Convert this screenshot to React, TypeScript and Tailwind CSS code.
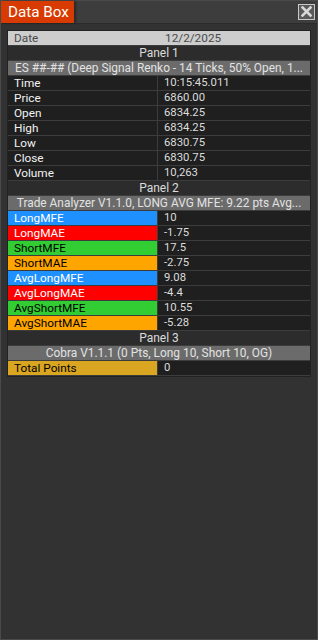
import React from "react";

type Row = { label: string; value: string; bg?: string; fg?: string };

const panel1: Row[] = [
  { label: "Time", value: "10:15:45.011" },
  { label: "Price", value: "6860.00" },
  { label: "Open", value: "6834.25" },
  { label: "High", value: "6834.25" },
  { label: "Low", value: "6830.75" },
  { label: "Close", value: "6830.75" },
  { label: "Volume", value: "10,263" },
];

const panel2: Row[] = [
  { label: "LongMFE", value: "10", bg: "bg-[#1e90ff]", fg: "text-white" },
  { label: "LongMAE", value: "-1.75", bg: "bg-[#ff0000]", fg: "text-white" },
  { label: "ShortMFE", value: "17.5", bg: "bg-[#32cd32]", fg: "text-black" },
  { label: "ShortMAE", value: "-2.75", bg: "bg-[#ffa500]", fg: "text-black" },
  { label: "AvgLongMFE", value: "9.08", bg: "bg-[#1e90ff]", fg: "text-white" },
  { label: "AvgLongMAE", value: "-4.4", bg: "bg-[#ff0000]", fg: "text-white" },
  { label: "AvgShortMFE", value: "10.55", bg: "bg-[#32cd32]", fg: "text-black" },
  { label: "AvgShortMAE", value: "-5.28", bg: "bg-[#ffa500]", fg: "text-black" },
];

const panel3: Row[] = [
  { label: "Total Points", value: "0", bg: "bg-[#daa520]", fg: "text-black" },
];

function DataRow({ r }: { r: Row }) {
  return (
    <div className="flex h-[15px] border-b border-[#3c3c3c] bg-[#1f1f1f] text-[11.8px]">
      <div
        className={`w-[150px] shrink-0 pl-[6px] border-r border-[#3c3c3c] leading-[14px] ${
          r.bg ?? ""
        } ${r.fg ?? "text-[#f2f2f2]"}`}
      >
        {r.label}
      </div>
      <div className="flex-1 pl-[6px] leading-[14px] text-[#dcdcdc] text-[11.3px]">{r.value}</div>
    </div>
  );
}

function PanelRow({ text }: { text: string }) {
  return (
    <div className="h-[15px] border-b border-[#3c3c3c] bg-[#2c2c2c] text-center leading-[14px] text-[#dcdcdc] text-[12px]">
      {text}
    </div>
  );
}

function HeaderRow({ text }: { text: string }) {
  return (
    <div className="h-[15px] border-b border-[#3c3c3c] bg-[#6b6b6b] text-center leading-[14px] text-[#e2e2e2] text-[11.9px] whitespace-nowrap overflow-hidden">
      {text}
    </div>
  );
}

export default function App() {
  return (
    <div
      className="w-[318px] h-[640px] bg-[#323233] border border-[#4a4a4a] flex flex-col"
      style={{ fontFamily: 'Roboto, "Noto Sans", sans-serif' }}
    >
      <div className="h-[23px] shrink-0 bg-[#3d3d3d] flex items-stretch justify-between border-b border-[#2b2b2b]">
        <div className="bg-[#d83b01] text-white text-[15.2px] leading-[22px] pl-[7px] pr-[5px] shadow-[2px_0_2px_rgba(0,0,0,0.35)]">
          Data Box
        </div>
        <div className="flex items-center pr-[2px]">
          <div className="w-[17px] h-[16px] border border-[#c8c8c8] bg-[#5a5a5a] flex items-center justify-center mt-[-1px]">
            <svg width="11" height="11" viewBox="0 0 11 11">
              <path d="M1.5 1.5 L9.5 9.5 M9.5 1.5 L1.5 9.5" stroke="#d8d8d8" strokeWidth="2.6" strokeLinecap="square" />
            </svg>
          </div>
        </div>
      </div>
      <div className="flex-1 px-[6px] pt-[6px]">
        <div className="border border-[#222]">
          <div className="flex h-[15px] border-b border-[#3c3c3c] bg-[#cdcdcd] text-[#4a4a4a] text-[11.8px]">
            <div className="w-[150px] shrink-0 pl-[6px] leading-[14px]">Date</div>
            <div className="flex-1 pl-[7px] leading-[14px]">12/2/2025</div>
          </div>
          <PanelRow text="Panel 1" />
          <HeaderRow text="ES ##-## (Deep Signal Renko - 14 Ticks, 50% Open, 1..." />
          {panel1.map((r) => (
            <DataRow key={r.label} r={r} />
          ))}
          <PanelRow text="Panel 2" />
          <HeaderRow text="Trade Analyzer V1.1.0, LONG AVG MFE: 9.22 pts  Avg..." />
          {panel2.map((r) => (
            <DataRow key={r.label} r={r} />
          ))}
          <PanelRow text="Panel 3" />
          <HeaderRow text="Cobra V1.1.1 (0 Pts, Long 10, Short 10, OG)" />
          {panel3.map((r) => (
            <DataRow key={r.label} r={r} />
          ))}
        </div>
      </div>
    </div>
  );
}
